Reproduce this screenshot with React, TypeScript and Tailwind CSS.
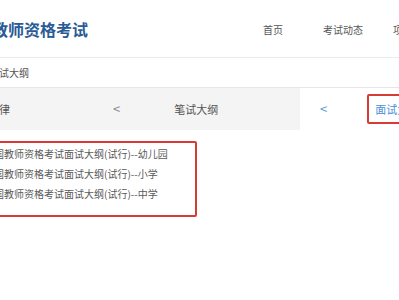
import React from 'react';

const lines = [
  '国教师资格考试面试大纲(试行)--幼儿园',
  '国教师资格考试面试大纲(试行)--小学',
  '国教师资格考试面试大纲(试行)--中学',
];

export default function App() {
  return (
    <div
      className="w-[399px] h-[300px] overflow-hidden bg-white"
      style={{ fontFamily: '"Noto Sans CJK SC", "Noto Sans", sans-serif' }}
    >
      <div className="flex items-start h-[58px] border-b border-[#ececec] overflow-hidden">
        <h1 className="-ml-[8px] mt-[19px] text-[16px] leading-[20px] font-bold text-[#2a5b94] whitespace-nowrap shrink-0">
          教师资格考试
        </h1>
        <nav className="flex shrink-0 ml-[175px] mt-[23px] text-[10px] leading-[14px] text-[#555] whitespace-nowrap">
          <span>首页</span>
          <span className="ml-[40px]">考试动态</span>
          <span className="ml-[30px]">项目</span>
        </nav>
      </div>

      <div className="h-[30px] flex items-center border-b border-[#e6e6e6] text-[10px] text-[#555] whitespace-nowrap">
        <span className="-ml-[1px]">试大纲</span>
      </div>

      <div className="flex h-[42px] text-[11px] whitespace-nowrap overflow-hidden">
        <div className="w-[300px] shrink-0 flex items-center bg-[#f4f4f4] text-[#555]">
          <span className="-ml-[1px]">律</span>
          <span className="ml-[103px] text-[#888] text-[13px]">&lt;</span>
          <span className="ml-[54px]">笔试大纲</span>
        </div>
        <div className="flex shrink-0 items-center">
          <span className="ml-[20px] text-[13px] text-[#5b9bd5]">&lt;</span>
          <div className="ml-[40px] shrink-0 h-[30px] w-[60px] border-2 border-[#d83a34] rounded-[2px] flex items-center pl-[6px] text-[#4a8fd6]">
            面试大纲
          </div>
        </div>
      </div>

      <div className="-ml-[4px] mt-[11px] w-[201px] h-[76px] border-2 border-[#d83a34] rounded-[2px] flex flex-col pt-[5px] gap-[8px] text-[10px] leading-[12px] text-[#5a5a5a] whitespace-nowrap overflow-hidden">
        {lines.map((l) => (
          <div key={l} className="-ml-[4px]">{l}</div>
        ))}
      </div>
    </div>
  );
}
